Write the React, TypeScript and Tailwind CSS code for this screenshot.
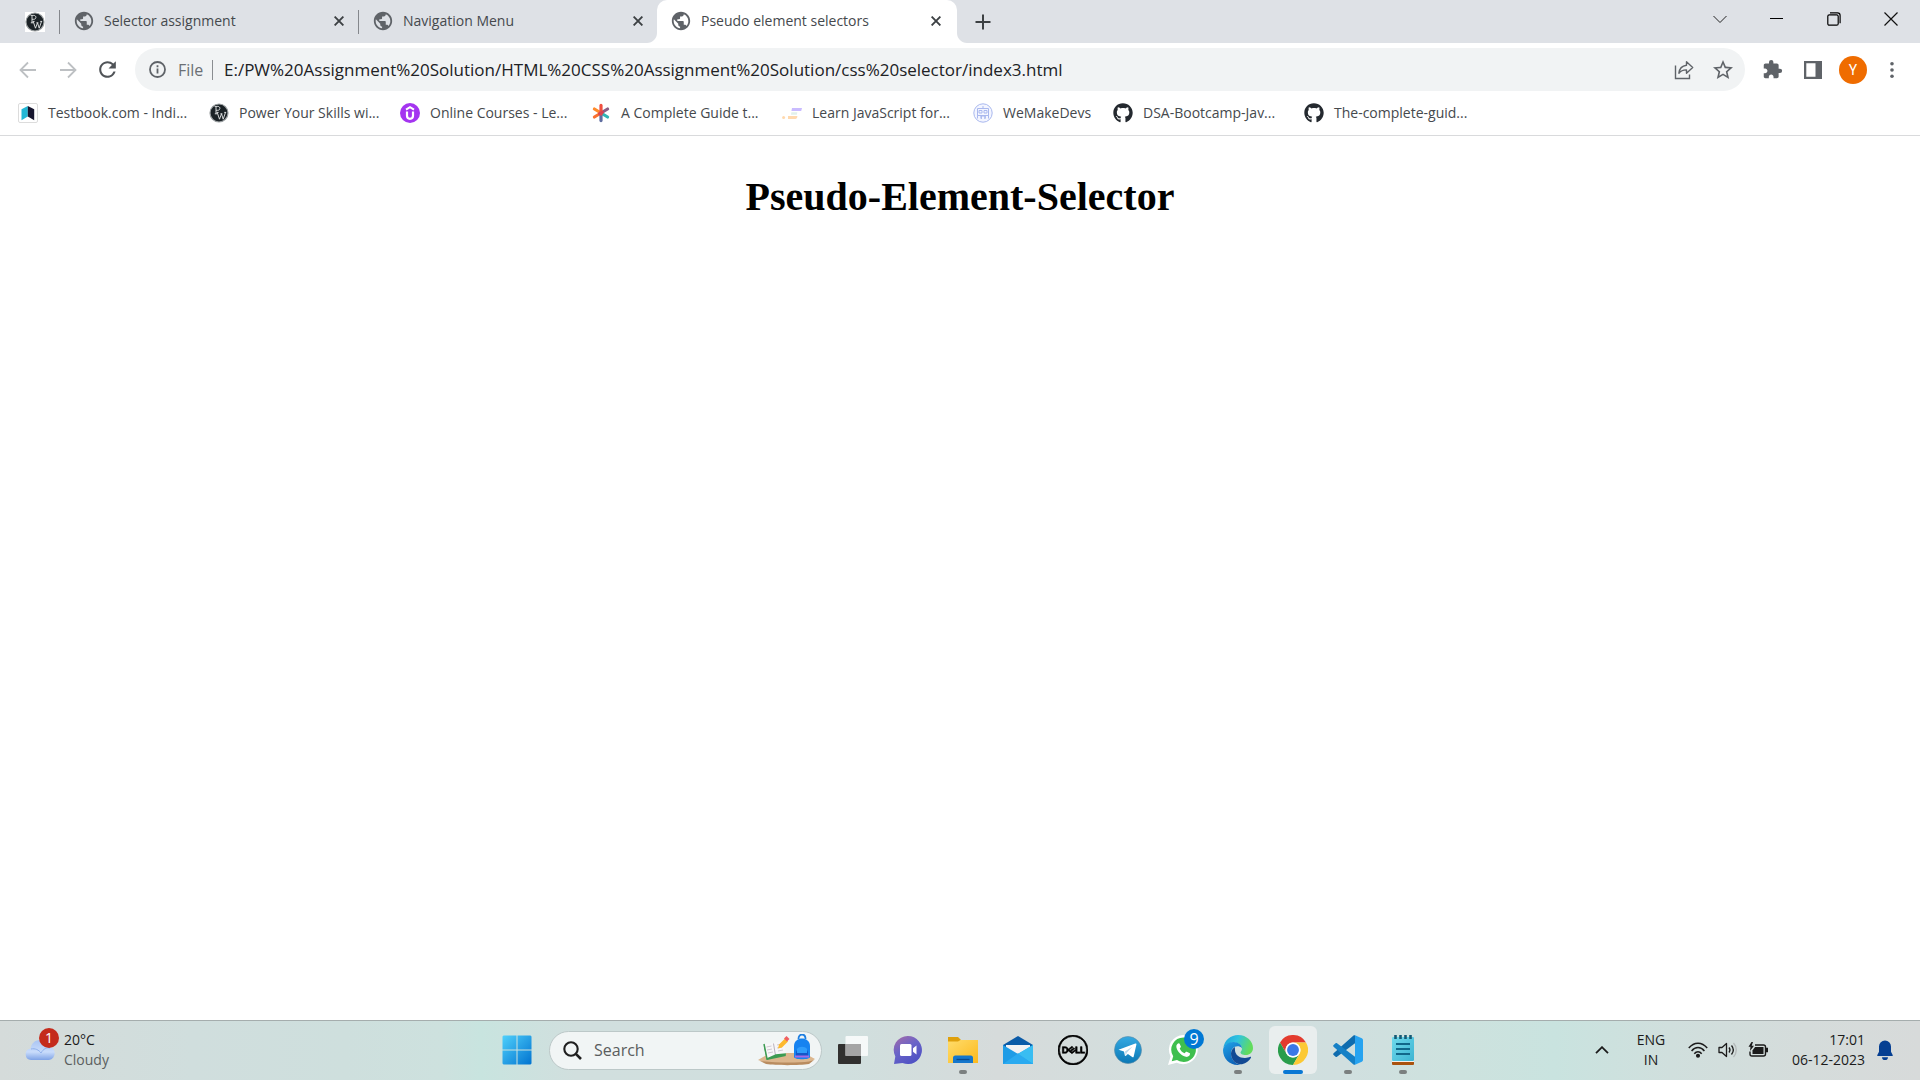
import type { ReactNode } from "react";
import { FaGithub } from "react-icons/fa";
import { MdPublic, MdExtension, MdStarBorder, MdRefresh } from "react-icons/md";
import { SiDell } from "react-icons/si";

const ui = "font-['Open_Sans','Noto_Sans',sans-serif]";

function PwIcon({ plain = false }: { plain?: boolean }) {
  return (
    <svg viewBox="0 0 20 20" className="size-5 shrink-0" aria-hidden="true">
      {plain && <rect width="20" height="20" fill="#fff" />}
      <circle cx="10" cy="10" r="9" fill="#1b2226" stroke="#9a9fa1" strokeWidth="1.2" />
      <path d="M7 3.4v7.4M5.600 3.400h3.200c2.800 0 2.800 3.900 0 3.900H7M5.800 10.800h2.400" fill="none" stroke="#e8eaea" strokeWidth=".9" />
      <path d="M8.200 9.400l2.300 6.800 2-5.400 1.700 5.400 2.300-6.800M7.600 9.400h2M11.400 10.800h2M15.200 9.400h2" fill="none" stroke="#e8eaea" strokeWidth=".9" />
    </svg>
  );
}

function TestbookIcon() {
  return (
    <svg viewBox="0 0 20 20" className="size-5 shrink-0" aria-hidden="true">
      <rect x=".5" y=".5" width="19" height="19" rx="1.5" fill="#fff" stroke="#dcdcdc" />
      <path d="M3.5 6.2 9.8 3v10.5l-6.3 3.7z" fill="#22b8d6" />
      <path d="M9.8 3l6.4 3.2v11L9.8 13.5z" fill="#17162f" />
    </svg>
  );
}

function UdemyIcon() {
  return (
    <svg viewBox="0 0 20 20" className="size-5 shrink-0" aria-hidden="true">
      <circle cx="10" cy="10" r="10" fill="#a435f0" />
      <path d="M6 6.6 10 4.2l4 2.4" fill="none" stroke="#fff" strokeWidth="2" />
      <path d="M7 8.6v4.2c0 4 6 4 6 0V8.6" fill="none" stroke="#fff" strokeWidth="2.2" />
    </svg>
  );
}

function AsteriskIcon() {
  return (
    <svg viewBox="0 0 20 20" className="size-5 shrink-0" aria-hidden="true" fill="none" strokeWidth="3.2" strokeLinecap="round">
      <path d="M10 10 3.4 6" stroke="#ff8a2a" />
      <path d="M10 10l-6.6 4" stroke="#f9702f" />
      <path d="M10 10l6.6-4" stroke="#8a5f86" />
      <path d="M10 10l6.6 4" stroke="#2fb5b5" />
      <path d="M10 10v7.6" stroke="#5f6da0" />
      <path d="M10 11V2.4" stroke="#f0503f" />
      <path d="M8.6 10.6l2.8-1.2" stroke="#d94452" />
    </svg>
  );
}

function ScrimbaIcon() {
  return (
    <svg viewBox="0 0 20 20" className="size-5 shrink-0" aria-hidden="true">
      <path d="M10 5h10l-.8 3H9.4z" fill="#c9bbff" />
      <path d="M9.4 9.2h6l-.6 2.6H9z" fill="#e1f0ea" />
      <path d="M6 13h9.4c0 2-1 3-2 3H6z" fill="#ffd9ae" />
      <circle cx="1.6" cy="14.5" r="1.5" fill="#ffd9ae" />
    </svg>
  );
}

function WeMakeDevsIcon() {
  return (
    <svg viewBox="0 0 20 20" className="size-5 shrink-0" aria-hidden="true" fill="none" stroke="#a9b8ee">
      <circle cx="10" cy="10" r="9.2" strokeWidth="1" fill="#f3f5ff" />
      <path d="M4.5 5.5h11v7h-11zM6 7.5h3v2.5H6zM11 7.5h3v2.5h-3z" />
      <path d="M4.5 15.5v-3h3.4v3M8.4 16v-3h3.4v3M12.3 15.5v-3h3.2v3M9 4h2" />
    </svg>
  );
}

const bookmarks: { label: string; icon: ReactNode; short?: boolean }[] = [
  { label: "Testbook.com - Indi...", icon: <TestbookIcon /> },
  { label: "Power Your Skills wi...", icon: <PwIcon /> },
  { label: "Online Courses - Le...", icon: <UdemyIcon /> },
  { label: "A Complete Guide t...", icon: <AsteriskIcon /> },
  { label: "Learn JavaScript for...", icon: <ScrimbaIcon /> },
  { label: "WeMakeDevs", icon: <WeMakeDevsIcon />, short: true },
  { label: "DSA-Bootcamp-Jav...", icon: <FaGithub className="size-5 shrink-0 text-[#24292f]" /> },
  { label: "The-complete-guid...", icon: <FaGithub className="size-5 shrink-0 text-[#24292f]" /> },
];

function CloseGlyph() {
  return (
    <svg viewBox="0 0 10 10" className="size-2.5" fill="none" stroke="#3c4043" strokeWidth="1.9" aria-hidden="true">
      <path d="M.6.6l8.8 8.8M9.4.6.6 9.4" />
    </svg>
  );
}

function Tab({ title, active = false }: { title: string; active?: boolean }) {
  return (
    <div
      className={
        active
          ? "relative flex h-full w-[300px] items-center rounded-t-[10px] bg-white pr-4 pb-px pl-[13px]"
          : "flex h-full w-[298px] items-center pr-[14px] pb-px pl-[13px]"
      }
    >
      {active && (
        <>
          <svg viewBox="0 0 10 10" className="absolute bottom-0 -left-2.5 size-2.5" aria-hidden="true">
            <path d="M10 0v10H0C5.500 10 10 5.500 10 0z" fill="#fff" />
          </svg>
          <svg viewBox="0 0 10 10" className="absolute -right-2.5 bottom-0 size-2.5" aria-hidden="true">
            <path d="M0 0v10h10C4.500 10 0 5.500 0 0z" fill="#fff" />
          </svg>
        </>
      )}
      <button className="flex min-w-0 flex-1 items-center gap-[9px] text-left">
        <MdPublic className="size-[22px] shrink-0 text-[#5f6368]" />
        <span className="truncate text-sm text-[#45494d]">{title}</span>
      </button>
      <button aria-label={`Close ${title}`}>
        <CloseGlyph />
      </button>
    </div>
  );
}

function TabStrip() {
  return (
    <header className="flex h-[43px] items-center bg-[#dee1e6]">
      <button aria-label="Pinned tab" className="flex h-full w-[59px] items-center pl-[25px]">
        <PwIcon plain />
      </button>
      <div className="h-6 w-px bg-[#84878c]" />
      <Tab title="Selector assignment" />
      <div className="h-6 w-px bg-[#84878c]" />
      <Tab title="Navigation Menu" />
      <Tab title="Pseudo element selectors" active />
      <button aria-label="New tab" className="ml-[18px]">
        <svg viewBox="0 0 16 16" className="size-4" stroke="#3c4043" strokeWidth="2" aria-hidden="true">
          <path d="M8 .5v15M.5 8h15" />
        </svg>
      </button>
      <div className="ml-auto flex h-[37px] items-center self-start">
        <button aria-label="Search tabs" className="grid h-full w-[57px] place-items-center">
          <svg viewBox="0 0 14 14" className="size-3.5" fill="none" stroke="#222" aria-hidden="true">
            <path d="M.5 4 7 10.500 13.500 4" />
          </svg>
        </button>
        <button aria-label="Minimize" className="grid h-full w-[57px] place-items-center">
          <span className="h-px w-[13px] bg-black" />
        </button>
        <button aria-label="Restore" className="grid h-full w-[57px] place-items-center">
          <svg viewBox="0 0 14 14" className="size-3.5" fill="none" stroke="#000" strokeWidth="1.2" aria-hidden="true">
            <rect x=".8" y="2.800" width="10.400" height="10.400" rx="1.500" />
            <path d="M3 .8h7.500a2.600 2.600 0 0 1 2.600 2.600v7.800" />
          </svg>
        </button>
        <button aria-label="Close window" className="grid h-full w-[58px] place-items-center">
          <svg viewBox="0 0 14 14" className="size-3.5" stroke="#111" strokeWidth="1.200" aria-hidden="true">
            <path d="M.5.5l13 13M13.500.5l-13 13" />
          </svg>
        </button>
      </div>
    </header>
  );
}

function Toolbar() {
  return (
    <div className="flex items-center bg-white pt-[5px] pr-6 pb-1 pl-[19px]">
      <button aria-label="Back" className="mr-[22px]">
        <svg viewBox="0 0 18 18" className="size-[18px]" fill="none" stroke="#bdc0c3" strokeWidth="1.800" aria-hidden="true">
          <path d="M17 9H1.800M9 1.500 1.500 9 9 16.500" />
        </svg>
      </button>
      <button aria-label="Forward" className="mr-[18px]">
        <svg viewBox="0 0 18 18" className="size-[18px]" fill="none" stroke="#bdc0c3" strokeWidth="1.800" aria-hidden="true">
          <path d="M1 9h15.200M9 1.500 16.500 9 9 16.500" />
        </svg>
      </button>
      <button aria-label="Reload" className="mr-[15px]">
        <MdRefresh className="size-[25px] text-[#505458]" />
      </button>
      <div className="flex h-[43px] min-w-0 flex-1 items-center rounded-full bg-[#f1f3f4] pr-2.5 pl-[14px]">
        <svg viewBox="0 0 17 17" className="size-[17px] shrink-0" fill="none" stroke="#5f6368" strokeWidth="1.800" aria-hidden="true">
          <circle cx="8.500" cy="8.500" r="7.500" />
          <path d="M8.500 7.500v5M8.500 4.300v1.900" />
        </svg>
        <span className="ml-3 w-[34px] text-base text-[#6b6f74]">File</span>
        <span className="h-5 w-px bg-[#8a8d91]" />
        <input
          aria-label="Address"
          className="ml-[11px] min-w-0 flex-1 bg-transparent text-[17px] text-[#202124] outline-none"
          defaultValue="E:/PW%20Assignment%20Solution/HTML%20CSS%20Assignment%20Solution/css%20selector/index3.html"
        />
        <button aria-label="Share" className="mr-[17px]">
          <svg viewBox="0 0 20 20" className="size-5" fill="none" stroke="#5f6368" strokeWidth="1.400" aria-hidden="true">
            <path d="M1.500 5.500v13h14v-4" />
            <path d="M12.500 1.800 18.700 7.500l-6.200 5.700V9.900c-3.500-.1-5.800 1-7.600 3.300.5-4.400 3-7.300 7.600-7.900z" strokeLinejoin="round" />
          </svg>
        </button>
        <button aria-label="Bookmark this page">
          <MdStarBorder className="size-6 text-[#5f6368]" />
        </button>
      </div>
      <div className="flex items-center pl-[17px]">
        <button aria-label="Extensions" className="mr-[21px]">
          <MdExtension className="size-[21px] text-[#5f6368]" />
        </button>
        <button aria-label="Side panel" className="mr-[17px]">
          <svg viewBox="0 0 18 18" className="size-[18px]" aria-hidden="true">
            <path d="M0 0h18v18H0zM2.300 2.300v13.400h9.200V2.300z" fill="#5f6368" fillRule="evenodd" />
          </svg>
        </button>
        <button aria-label="Profile" className="mr-[21px] grid size-7 place-items-center rounded-full bg-[#ef6c00] font-[Roboto,sans-serif] text-sm text-white">
          Y
        </button>
        <button aria-label="Menu" className="w-2">
          <svg viewBox="0 0 8 18" className="h-[18px] w-2" fill="#5f6368" aria-hidden="true">
            <circle cx="4" cy="2.800" r="1.800" />
            <circle cx="4" cy="9" r="1.800" />
            <circle cx="4" cy="15.200" r="1.800" />
          </svg>
        </button>
      </div>
    </div>
  );
}

function BookmarkBar() {
  return (
    <nav aria-label="Bookmarks" className="flex h-[41px] items-center border-b border-[#d9dadc] bg-white pb-[5px] pl-[18px]">
      {bookmarks.map((b) => (
        <a
          key={b.label}
          href="#"
          className={
            b.short
              ? "flex w-[140px] items-center gap-2.5 text-sm whitespace-nowrap text-[#45494d]"
              : "flex w-[191px] items-center gap-2.5 text-sm whitespace-nowrap text-[#45494d]"
          }
        >
          {b.icon}
          {b.label}
        </a>
      ))}
    </nav>
  );
}

function StartIcon() {
  return (
    <svg viewBox="0 0 30 30" className="size-[30px]" aria-hidden="true">
      <defs>
        <linearGradient id="win" x1="0" y1="0" x2="1" y2="1">
          <stop offset="0" stopColor="#4fd0fb" />
          <stop offset="1" stopColor="#0173d0" />
        </linearGradient>
      </defs>
      <path d="M1.500.5h13v14h-14v-13zM15.500.5h13l1 1v13h-14zM.5 15.500h14v14h-13l-1-1zM15.500 15.500h14v13l-1 1h-13z" fill="url(#win)" />
    </svg>
  );
}

function SearchArt() {
  return (
    <svg viewBox="0 0 57 32" className="h-8 w-[57px]" aria-hidden="true">
      <path d="M0 26 12 19h34l11 6-6 4c-10 2-33 2-43 0z" fill="#dcb68d" />
      <path d="M2 27l6 3c10 1.500 33 1.500 43 0l5-4-5 1.500C40 29 18 29 2 27z" fill="#b98c60" />
      <path d="M6 13l3 13 19-4-2-4-4-10z" fill="#3d9b52" />
      <path d="M6 10l9-1 11-3 2 14-10 1-9 4z" fill="#f7f6f8" />
      <path d="M15.500 9.500l2 12" stroke="#b9b2bd" />
      <path d="M6 10l3 15 9-4 10-1" fill="none" stroke="#3d9b52" strokeWidth="1.500" />
      <path d="M8.500 13l5-1M9 16l5-1M10 19l5-1M19 11l5-1M19 14l5-1M20 17l5-1" stroke="#c5bec8" strokeWidth=".8" />
      <path d="M20 14.500l1-4 6-6 3 3-6 6z" fill="#fdb92e" />
      <path d="M26 4.500 28.500 2l3 3L29 7.500z" fill="#ef5f62" />
      <path d="M40.500 5c0-6 7-6 7 0" fill="none" stroke="#1f7fe0" strokeWidth="1.800" />
      <path d="M36 12c0-10 16-10 16 0v11c0 3-16 3-16 0z" fill="#1683f0" />
      <path d="M38 18c1-5 11-5 12 0v4H38z" fill="#1457c9" />
      <path d="M39 15c2-3 8-3 10 0v4H39z" fill="#2f9dfb" />
      <path d="M37 22.500h14" stroke="#a56be6" strokeWidth="2" />
    </svg>
  );
}

function TaskViewIcon() {
  return (
    <svg viewBox="0 0 30 30" className="size-[30px]" aria-hidden="true">
      <rect x="0" y="9" width="23" height="20" rx="1" fill="#31302f" />
      <rect x="7.500" y="1" width="22.500" height="20" rx="1" fill="#fff" fillOpacity=".8" />
      <rect x="7.500" y="9" width="15.500" height="12" fill="#a5a5a5" />
    </svg>
  );
}

function ChatIcon() {
  return (
    <svg viewBox="0 0 30 30" className="size-[30px]" aria-hidden="true">
      <defs>
        <linearGradient id="chat" x1="0" y1="0" x2=".6" y2="1">
          <stop offset="0" stopColor="#a86ba6" />
          <stop offset=".5" stopColor="#6b64c8" />
          <stop offset="1" stopColor="#4f52c4" />
        </linearGradient>
      </defs>
      <path d="M15 1a14 14 0 1 1-5.500 26.900L1 29l1.300-7.500A14 14 0 0 1 15 1z" fill="url(#chat)" />
      <rect x="7" y="9" width="11.500" height="12" rx="1.500" fill="#fff" />
      <path d="M20 13.200l3.500-2.700v9L20 16.800z" fill="#fff" />
    </svg>
  );
}

function FolderIcon() {
  return (
    <svg viewBox="0 0 30 30" className="size-[30px]" aria-hidden="true">
      <defs>
        <linearGradient id="fold" x1="0" y1="0" x2="1" y2="1">
          <stop offset="0" stopColor="#ffdc6b" />
          <stop offset="1" stopColor="#fcb91c" />
        </linearGradient>
      </defs>
      <path d="M0 2h10l3 3v6H0z" fill="#dfa00c" />
      <path d="M0 6.500h10l2.500-1.500H30v23H0z" fill="url(#fold)" />
      <path d="M5 28v-5c0-1.500.8-2.500 2.300-2.500h15.400c1.500 0 2.300 1 2.300 2.500v5z" fill="#1677cc" />
      <path d="M8.500 24.500h13" stroke="#0a4a8f" strokeWidth="1.300" />
    </svg>
  );
}

function MailIcon() {
  return (
    <svg viewBox="0 0 30 30" className="size-[30px]" aria-hidden="true">
      <path d="M0 10 15 1l15 9v6H0z" fill="#0a5ba8" />
      <path d="M3 10h24v8H3z" fill="#f2f2f4" />
      <path d="M0 10l15 9 15-9v19H0z" fill="#1f9ce6" />
      <path d="M30 10v19L14.500 19z" fill="#39bdf2" />
      <path d="M0 29l15-10.500L30 29z" fill="#2aaaf0" />
    </svg>
  );
}

function DellIcon() {
  return <SiDell className="size-[30px] stroke-black [stroke-width:0.5px] text-black" />;
}

function TelegramIcon() {
  return (
    <svg viewBox="0 0 30 30" className="size-[30px]" aria-hidden="true">
      <defs>
        <linearGradient id="tg" x1="0" y1="0" x2="0" y2="1">
          <stop offset="0" stopColor="#34a9e2" />
          <stop offset="1" stopColor="#0b78b5" />
        </linearGradient>
      </defs>
      <circle cx="15" cy="15" r="13.500" fill="url(#tg)" stroke="#5a8aa4" strokeWidth=".6" />
      <path d="M5.500 14.800 22.300 8.500c.8-.3 1.300.3 1.100 1.100L20.700 21.500c-.2.9-.9 1-1.500.6l-4.300-3.200-2.200 2.200-.8-.3-.9-4.200z" fill="#fff" />
      <path d="M12 16.500l7.500-5-5.800 6.200-.8 3z" fill="#b9d8ea" />
    </svg>
  );
}

function WhatsAppIcon() {
  return (
    <span className="relative">
      <svg viewBox="0 0 30 30" className="size-[30px]" aria-hidden="true">
        <path d="M15.500 0A14.600 14.600 0 0 0 2.600 21.500L0 30l8.700-2.300A14.600 14.600 0 1 0 15.500 0z" fill="#fff" />
        <path d="M15.500 2.500A12.200 12.200 0 0 0 5.200 21.200l-1.500 5.100 5.300-1.400A12.200 12.200 0 1 0 15.500 2.500z" fill="#3fbf4e" />
        <path d="M10.700 8.200c-1.600.4-2.700 2-2.300 4 1 4.500 5 8.600 9.500 9.600 2.200.4 3.800-.8 4.100-2.700.1-.6-.1-.8-.6-1l-2.700-1.300c-.4-.2-.8-.1-1 .3l-1 1.200c-2.400-.9-4-2.500-5-4.800l1-1.200c.3-.4.3-.7.100-1.100l-1.200-2.500c-.2-.4-.4-.6-.9-.5z" fill="#fff" />
      </svg>
      <span className="absolute -top-1.5 -right-1.5 grid size-5 place-items-center rounded-full bg-[#0078d4] text-base leading-none text-white">9</span>
    </span>
  );
}

function EdgeIcon() {
  return (
    <svg viewBox="0 0 30 30" className="size-[30px]" aria-hidden="true">
      <defs>
        <linearGradient id="eg1" x1="0" y1="0" x2="1" y2=".3">
          <stop offset="0" stopColor="#1c9fdc" />
          <stop offset=".5" stopColor="#2fc3df" />
          <stop offset="1" stopColor="#62dc5c" />
        </linearGradient>
        <linearGradient id="eg2" x1="0" y1="0" x2=".5" y2="1">
          <stop offset="0" stopColor="#1fa3e8" />
          <stop offset="1" stopColor="#0d63b8" />
        </linearGradient>
      </defs>
      <path d="M.3 13C1.500 5 8 0 15 0c9 0 15 6.500 15 13 0 4.700-3.700 7-7 7-4 0-5.500-1.500-5.500-2.500s1.500-1.500 1.500-4C19 10 15 7.500 11 7.500 6 7.500 1.500 10 .3 13z" fill="url(#eg1)" />
      <path d="M0 15c.5-5 5-8 10.500-8 5 0 8.500 3 8.500 6.500-1-2-3-2.300-4.500-2.300-4 0-6.500 3.300-6.500 7.300C8 24 12 29 17.500 29.700 8 31.500 0 24.500 0 15z" fill="url(#eg2)" />
      <path d="M12 11.900c-2.500 1.300-4 4-4 6.600C8 25 13 30 19 29.200c4-.7 7.500-3.500 9-6.700.3-.7-.2-1-.8-.7-1.500.7-3 1.200-5.200 1.200-6 0-9.700-3.500-10-7.500-.1-1.300-.1-2.400 0-3.600z" fill="#124a94" />
    </svg>
  );
}

function ChromeIcon() {
  return (
    <svg viewBox="0 0 48 48" className="size-[30px]" aria-hidden="true">
      <path d="M3.200 12A24 24 0 0 1 44.800 12H24a12 12 0 0 0-10.400 18z" fill="#e33b2e" />
      <path d="M3.200 12 13.600 30A12 12 0 0 0 34.400 30L24 48A24 24 0 0 1 3.200 12z" fill="#2a9d4b" />
      <path d="M44.800 12A24 24 0 0 1 24 48l10.400-18A12 12 0 0 0 24 12z" fill="#fcc934" />
      <circle cx="24" cy="24" r="12" fill="#fff" />
      <circle cx="24" cy="24" r="9.500" fill="#3b78e7" />
    </svg>
  );
}

function VsCodeIcon() {
  return (
    <svg viewBox="0 0 30 30" className="size-[30px]" aria-hidden="true">
      <path d="M22 .3v7.900L4 21.800c-.5.400-1 .3-1.400 0L.6 20c-.6-.5-.6-1.200 0-1.700L20.500.6c.5-.4 1-.5 1.500-.3z" fill="#0f6cae" />
      <path d="M22 29.700v-7.900L4 8.200c-.5-.4-1-.3-1.400 0L.6 10c-.6.500-.6 1.200 0 1.700l19.900 17.700c.5.400 1 .5 1.500.3z" fill="#1580c6" />
      <path d="M22 .2l6.800 3.100c.8.400 1.200 1 1.200 1.800v19.800c0 .8-.4 1.400-1.200 1.800L22 29.800z" fill="#27a3f0" />
    </svg>
  );
}

function NotepadIcon() {
  return (
    <svg viewBox="0 0 30 30" className="size-[30px]" aria-hidden="true">
      <defs>
        <linearGradient id="note" x1="0" y1="0" x2="1" y2="1">
          <stop offset="0" stopColor="#6fd9ec" />
          <stop offset="1" stopColor="#3db4d2" />
        </linearGradient>
      </defs>
      <path d="M4 26h22v3q0 1-1 1H5q-1 0-1-1z" fill="#a9520e" />
      <path d="M4 24h22v3H4z" fill="#f3efec" />
      <rect x="4" y="2" width="22" height="24" rx="1" fill="url(#note)" />
      <path d="M8 9h14M8 14h14M8 19h14" stroke="#11678a" strokeWidth="1.800" />
      <path d="M7.500 0v4M12.500 0v4M17.500 0v4M22.500 0v4" stroke="#155a75" strokeWidth="2.600" />
    </svg>
  );
}

const apps: { name: string; icon: ReactNode; state?: "open" | "focused" }[] = [
  { name: "Task view", icon: <TaskViewIcon /> },
  { name: "Chat", icon: <ChatIcon /> },
  { name: "File Explorer", icon: <FolderIcon />, state: "open" },
  { name: "Mail", icon: <MailIcon /> },
  { name: "Dell", icon: <DellIcon /> },
  { name: "Telegram", icon: <TelegramIcon /> },
  { name: "WhatsApp", icon: <WhatsAppIcon /> },
  { name: "Edge", icon: <EdgeIcon />, state: "open" },
  { name: "Chrome", icon: <ChromeIcon />, state: "focused" },
  { name: "Visual Studio Code", icon: <VsCodeIcon />, state: "open" },
  { name: "Notepad", icon: <NotepadIcon />, state: "open" },
];

function Weather() {
  return (
    <button className="flex items-center pb-0.5 pl-[25px] text-left">
      <span className="relative mr-[9px] pb-1">
        <svg viewBox="0 0 30 20" className="mt-1 h-5 w-[30px]" aria-hidden="true">
          <defs>
            <linearGradient id="cloud" x1="0" y1="0" x2="0" y2="1">
              <stop offset="0" stopColor="#a9c4f3" />
              <stop offset=".6" stopColor="#c9dcfb" />
              <stop offset="1" stopColor="#7fa3e6" />
            </linearGradient>
          </defs>
          <path d="M6 20a5.800 5.800 0 0 1-.5-11.500C6.500 3.500 10 0 14.500 0c4 0 7 2.500 8 6.500A6.800 6.800 0 0 1 24 20z" fill="url(#cloud)" />
          <path d="M6 9c4-1 8 1 10 4 2-4 6-6 9-5" fill="none" stroke="#8fb0ec" />
        </svg>
        <span className="absolute -top-2 -right-1 grid size-5 place-items-center rounded-full bg-[#c42b1c] text-sm leading-none text-white">1</span>
      </span>
      <span className="flex flex-col text-sm leading-5 text-[#1b1b1b]">
        <span>20°C</span>
        <span className="text-[#5b5f60]">Cloudy</span>
      </span>
    </button>
  );
}

function Tray() {
  return (
    <div className="flex items-center justify-end pr-[27px] pb-0.5 text-sm leading-5 text-[#1b1b1b]">
      <button aria-label="Show hidden icons" className="mr-[27px]">
        <svg viewBox="0 0 14 8" className="h-2 w-3.5" fill="none" stroke="#1b1b1b" strokeWidth="1.800" aria-hidden="true">
          <path d="M1 7.200 7 1.200l6 6" />
        </svg>
      </button>
      <button className="mr-[22px] flex w-[30px] flex-col items-center">
        <span>ENG</span>
        <span>IN</span>
      </button>
      <button aria-label="Network, volume and battery" className="mr-[17px] flex items-center gap-2.5">
        <svg viewBox="0 0 20 16" className="h-4 w-5" fill="none" stroke="#1b1b1b" strokeWidth="1.500" aria-hidden="true">
          <path d="M.8 6C6-.5 14-.5 19.200 6M3.600 9C7.300 4.400 12.700 4.400 16.400 9M6.300 11.800c2.200-2.700 5.200-2.700 7.400 0" />
          <circle cx="10" cy="13.700" r="1.300" fill="#1b1b1b" />
        </svg>
        <svg viewBox="0 0 20 16" className="h-4 w-5" fill="none" stroke="#1b1b1b" strokeWidth="1.300" aria-hidden="true">
          <path d="M1 5.500h3L8.500 1.500v13L4 10.500H1z" strokeLinejoin="round" />
          <path d="M11 5.500c1.200 1.500 1.200 3.500 0 5M13.500 3.500c2.200 2.700 2.200 6.300 0 9" />
          <path d="M15.500 1c3.700 4 3.700 10 0 14" stroke="#b4b9b9" />
        </svg>
        <svg viewBox="0 0 20 16" className="h-4 w-5" fill="none" stroke="#1b1b1b" strokeWidth="1.400" aria-hidden="true">
          <path d="M7 3h8.500q2 0 2 2v7q0 2-2 2H4q-2 0-2-2V9.500" />
          <path d="M4.500 8.500 7 5h8.500v7h-11z" fill="#1b1b1b" stroke="none" />
          <path d="M18 6.500h1.500v3H18z" fill="#1b1b1b" />
          <path d="M3.500 0 .5 4.800h2L2 9l4-5.300H3.700L5 0z" fill="#1b1b1b" stroke="none" />
        </svg>
      </button>
      <button className="mr-3 flex w-20 flex-col items-end whitespace-nowrap">
        <span>17:01</span>
        <span>06-12-2023</span>
      </button>
      <button aria-label="Notifications">
        <svg viewBox="0 0 16 20" className="h-5 w-4" fill="#063f92" aria-hidden="true">
          <path d="M8 .5a6 6 0 0 1 6 6v5.300l1.800 3.400q.3.800-.6.800H.8q-.9 0-.6-.8L2 11.800V6.500a6 6 0 0 1 6-6zM5 17.200h6a3 3 0 0 1-6 0z" />
        </svg>
      </button>
    </div>
  );
}

function Taskbar() {
  return (
    <footer className="grid h-[60px] grid-cols-[1fr_auto_1fr] border-t border-[#a5adad] bg-[linear-gradient(90deg,#d5dbda_0%,#d0dedd_10%,#cedfdd_18%,#cde1de_23%,#c8e4df_25%,#d1dfde_30%,#d0dfde_44%,#d6dbdb_52%,#d2dfde_62%,#d0dfdf_70%,#cde2de_76%,#c9e3df_81%,#d0dfdd_87%,#d5dcdb_94%,#d7dada_100%)]">
      <Weather />
      <div className="flex items-center gap-[7px] pb-px">
        <button aria-label="Start" className="grid size-12 place-items-center">
          <StartIcon />
        </button>
        <label className="ml-px flex h-[39px] w-[273px] items-center rounded-full border border-[#bcc8c8] bg-[#f1f5f5] pr-1.5 pl-[13px]">
          <svg viewBox="0 0 19 19" className="size-[19px] shrink-0" fill="none" stroke="#1f1f1f" strokeWidth="2.100" aria-hidden="true">
            <circle cx="8" cy="8" r="6.700" />
            <path d="M12.800 12.800l5.200 5.200" strokeWidth="2.600" />
          </svg>
          <input aria-label="Search" placeholder="Search" className="ml-3 min-w-0 flex-1 bg-transparent text-base text-[#1b1b1b] outline-none placeholder:text-[#5a5d5e]" />
          <SearchArt />
        </label>
        {apps.map((a) => (
          <button
            key={a.name}
            aria-label={a.name}
            className={
              a.state === "focused"
                ? "relative grid size-12 place-items-center rounded-md bg-[#e9eeee]"
                : "relative grid size-12 place-items-center"
            }
          >
            {a.icon}
            {a.state === "open" && <span className="absolute bottom-0 h-1 w-2 rounded-full bg-[#7b8080]" />}
            {a.state === "focused" && <span className="absolute bottom-0 h-1 w-5 rounded-full bg-[#0a78d4]" />}
          </button>
        ))}
      </div>
      <Tray />
    </footer>
  );
}

export default function App() {
  return (
    <div className={`flex min-h-screen flex-col bg-white ${ui}`}>
      <TabStrip />
      <Toolbar />
      <BookmarkBar />
      <main className="flex-1 px-2.5 pt-[38px]">
        <h1 className="text-center font-['Liberation_Serif',serif] text-[40px] leading-[46px] font-bold text-black">Pseudo-Element-Selector</h1>
      </main>
      <Taskbar />
    </div>
  );
}
